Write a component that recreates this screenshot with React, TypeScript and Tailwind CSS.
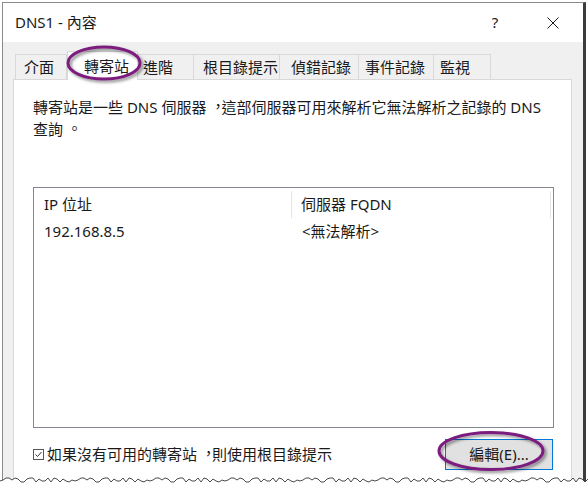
import React from 'react';

const font = { fontFamily: '"Noto Sans", "Noto Sans CJK TC", sans-serif' };

// label, width, left padding
const tabs: [string, number, number][] = [
  ['介面', 52, 8],
  ['轉寄站', 71, 16],
  ['進階', 57, 5],
  ['根目錄提示', 87, 9],
  ['偵錯記錄', 80, 11],
  ['事件記錄', 76, 6],
  ['監視', 58, 6],
];

// Taiwan-style centred punctuation
function P({ c }: { c: string }) {
  return <span className="relative left-[4px] -top-[1px]">{c}</span>;
}

function tornEdge() {
  const pts: string[] = [];
  let seed = 7;
  for (let x = 0; x <= 588; x += 3) {
    seed = (seed * 37 + 11) % 101;
    const y = 478 + (seed % 5);
    pts.push(`${x},${y}`);
  }
  return pts.join(' ');
}

export default function App() {
  const edge = tornEdge();

  return (
    <div lang="zh-Hant-TW" className="relative w-[588px] h-[487px] overflow-hidden bg-white text-[#1a1a1a]" style={font}>
      <div className="ml-[2px] mt-[2px] w-[584px] h-[485px] border-l border-t border-[#8a8a8a] border-r-[3px] border-r-[#3c3c3c] bg-[#f0f0f0]">
        {/* title bar */}
        <div className="flex items-center h-[39px] bg-white pl-[12px] pr-[7px]">
          <span className="text-[15px]">DNS1 - 內容</span>
          <div className="ml-auto flex items-center">
            <div className="w-[46px] text-center text-[15px]">?</div>
            <div className="w-[46px] ml-[12px] flex justify-center">
              <svg width="12" height="12" viewBox="0 0 12 12">
                <path d="M0.5 0.5 L11.5 11.5 M11.5 0.5 L0.5 11.5" stroke="#1a1a1a" strokeWidth="1" />
              </svg>
            </div>
          </div>
        </div>

        {/* body */}
        <div className="pl-[10px] pr-[11px] pt-[12px]">
          <div className="flex items-end h-[25px] pl-[2px]">
            {tabs.map(([label, w, pl], i) =>
              i === 1 ? (
                <div
                  key={label}
                  className="relative z-10 h-[29px] -mb-px bg-white border border-b-0 border-[#d9d9d9] flex items-center text-[15px]"
                  style={{ width: w, paddingLeft: pl }}
                >
                  {label}
                </div>
              ) : (
                <div
                  key={label}
                  className="h-[25px] border border-b-0 border-[#d9d9d9] -ml-px first:ml-0 bg-[#f0f0f0] flex items-center text-[15px]"
                  style={{ width: w, paddingLeft: pl }}
                >
                  {label}
                </div>
              )
            )}
          </div>

          <div className="w-[559px] h-[420px] bg-white border border-[#d9d9d9] pl-[19px] pr-[17px] pt-[16px]">
            <p className="text-[15px] leading-[22px]">
              轉寄站是一些 DNS 伺服器<P c="，" />這部伺服器可用來解析它無法解析之記錄的 DNS
              <br />
              查詢<P c="。" />
            </p>

            <div className="mt-[47px] h-[241px] border border-[#828790]">
              <div className="flex h-[31px] pt-[2px] text-[15px]">
                <div className="w-[258px] pl-[10px] flex items-center border-r border-[#e5e5e5] my-[1px]">IP 位址</div>
                <div className="w-[259px] pl-[9px] flex items-center border-r border-[#e5e5e5] my-[1px]">伺服器 FQDN</div>
              </div>
              <div className="flex h-[24px] items-center text-[15px]">
                <div className="w-[258px] pl-[10px]">192.168.8.5</div>
                <div className="pl-[10px]">&lt;無法解析&gt;</div>
              </div>
            </div>

            <div className="mt-[11px] h-[31px] flex items-center justify-between">
              <div className="flex items-center text-[15px]">
                <svg width="11" height="11" viewBox="0 0 11 11" className="mr-[3px]">
                  <rect x="0.5" y="0.5" width="10" height="10" fill="none" stroke="#555" strokeWidth="1" />
                  <path d="M2.5 5.5 L4.5 7.5 L8.5 3" fill="none" stroke="#333" strokeWidth="1" />
                </svg>
                <span>如果沒有可用的轉寄站<P c="，" />則使用根目錄提示</span>
              </div>
              <button className="w-[108px] h-[31px] mr-[1px] bg-[#e1e1e1] border border-[#0078d7] text-[15px] text-[#1a1a1a]">
                編輯(E)...
              </button>
            </div>
          </div>
        </div>
      </div>

      {/* torn bottom edge */}
      <svg className="absolute left-0 top-0 z-20 pointer-events-none" width="588" height="487">
        <polygon points={`${edge} 588,487 0,487`} fill="#ffffff" />
        <polyline points={edge} fill="none" stroke="#4a4a4a" strokeWidth="1" />
      </svg>

      {/* annotation ellipses */}
      <svg className="absolute left-0 top-0 z-30 pointer-events-none" width="588" height="487">
        <defs>
          <filter id="sh" x="-20%" y="-40%" width="140%" height="180%">
            <feDropShadow dx="2" dy="2" stdDeviation="1.5" floodColor="#000" floodOpacity="0.45" />
          </filter>
        </defs>
        <ellipse cx="104" cy="63" rx="36" ry="16" fill="none" stroke="#7b1b7e" strokeWidth="3" filter="url(#sh)" />
        <ellipse cx="491" cy="451" rx="52" ry="18.5" fill="none" stroke="#7b1b7e" strokeWidth="3" filter="url(#sh)" />
      </svg>
    </div>
  );
}
